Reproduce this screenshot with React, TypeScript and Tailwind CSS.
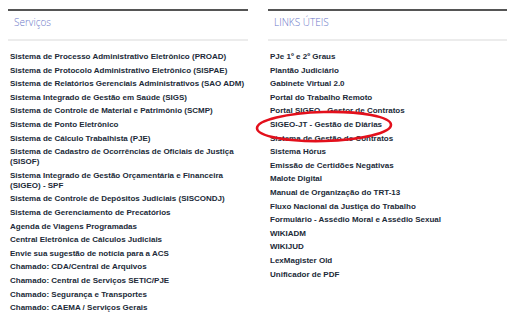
import React from "react";

const servicos: string[][] = [
  ["Sistema de Processo Administrativo Eletrônico (PROAD)"],
  ["Sistema de Protocolo Administrativo Eletrônico (SISPAE)"],
  ["Sistema de Relatórios Gerenciais Administrativos (SAO ADM)"],
  ["Sistema Integrado de Gestão em Saúde (SIGS)"],
  ["Sistema de Controle de Material e Patrimônio (SCMP)"],
  ["Sistema de Ponto Eletrônico"],
  ["Sistema de Cálculo Trabalhista (PJE)"],
  ["Sistema de Cadastro de Ocorrências de Oficiais de Justiça", "(SISOF)"],
  ["Sistema Integrado de Gestão Orçamentária e Financeira", "(SIGEO) - SPF"],
  ["Sistema de Controle de Depósitos Judiciais (SISCONDJ)"],
  ["Sistema de Gerenciamento de Precatórios"],
  ["Agenda de Viagens Programadas"],
  ["Central Eletrônica de Cálculos Judiciais"],
  ["Envie sua sugestão de notícia para a ACS"],
  ["Chamado: CDA/Central de Arquivos"],
  ["Chamado: Central de Serviços SETIC/PJE"],
  ["Chamado: Segurança e Transportes"],
  ["Chamado: CAEMA / Serviços Gerais"],
];

const links: string[][] = [
  ["PJe 1º e 2º Graus"],
  ["Plantão Judiciário"],
  ["Gabinete Virtual 2.0"],
  ["Portal do Trabalho Remoto"],
  ["Portal SIGEO - Gestor de Contratos"],
  ["SIGEO-JT - Gestão de Diárias"],
  ["Sistema de Gestão de Contratos"],
  ["Sistema Hórus"],
  ["Emissão de Certidões Negativas"],
  ["Malote Digital"],
  ["Manual de Organização do TRT-13"],
  ["Fluxo Nacional da Justiça do Trabalho"],
  ["Formulário - Assédio Moral e Assédio Sexual"],
  ["WIKIADM"],
  ["WIKIJUD"],
  ["LexMagister Old"],
  ["Unificador de PDF"],
];

function Column({ title, items, width }: { title: string; items: string[][]; width: string }) {
  return (
    <div className={`${width} shrink-0 border-t-2 border-[#555555]`}>
      <div
        className="h-[30px] border-b-[2px] border-[#ececec] pl-[6px] pt-[5px] text-[10px] leading-[12px] font-light text-[#6b78c8]"
        style={{ fontFamily: '"Open Sans", "Liberation Sans", sans-serif' }}
      >
        {title}
      </div>
      <ul className="pt-[11px] pl-[2px]">
        {items.map((lines) => (
          <li
            key={lines.join(" ")}
            className="whitespace-nowrap text-[8px] leading-[10px] font-bold text-[#212a38] pb-[3.6px]"
            style={{ fontFamily: '"Liberation Sans", Arial, sans-serif' }}
          >
            {lines.map((l, i) => (
              <React.Fragment key={i}>
                {i > 0 && <br />}
                {l}
              </React.Fragment>
            ))}
          </li>
        ))}
      </ul>
    </div>
  );
}

export default function App() {
  return (
    <div className="relative w-[512px] h-[315px] overflow-hidden bg-white">
      <div className="flex gap-[20px] pt-[9px] pl-[8px]">
        <Column title="Serviços" items={servicos} width="w-[240px]" />
        <Column title="LINKS ÚTEIS" items={links} width="w-[239px]" />
      </div>
      <svg
        className="absolute left-0 top-0 pointer-events-none"
        width="512"
        height="315"
        viewBox="0 0 512 315"
      >
        <ellipse
          cx="324"
          cy="126.5"
          rx="67"
          ry="14.5"
          fill="none"
          stroke="#e3101c"
          strokeWidth="2.6"
          transform="rotate(-1.5 324 126.5)"
        />
      </svg>
    </div>
  );
}
